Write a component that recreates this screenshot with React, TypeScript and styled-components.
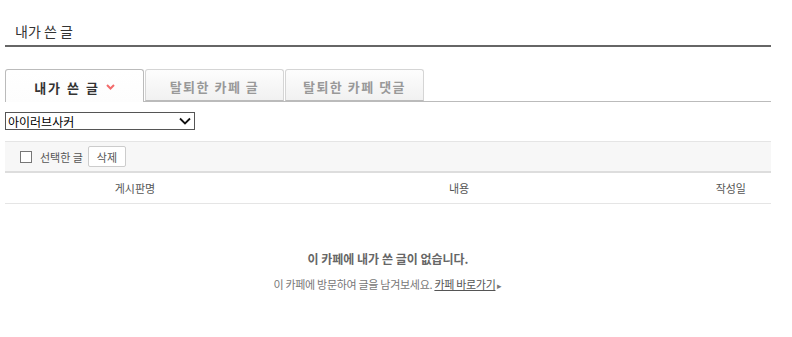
import React from "react";
import styled, { createGlobalStyle } from "styled-components";

const GlobalStyle = createGlobalStyle`
	body {
		margin: 0;
		background: #fff;
		font-family: "Noto Sans CJK KR", "Noto Sans", sans-serif;
		font-size: 12px;
		color: #333;
	}
`;

const tabs = ["내가 쓴 글", "탈퇴한 카페 글", "탈퇴한 카페 댓글"];

const App = () => {
	return (
		<>
			<GlobalStyle />
			<Page>
				<Title>내가 쓴 글</Title>
				<TabBar>
					{tabs.map((label, i) => (
						<Tab key={label} active={i === 0}>
							{label}
							{i === 0 && (
								<svg width="9" height="6" viewBox="0 0 9 6">
									<path d="M1 1l3.5 3.5L8 1" fill="none" stroke="#f36b6b" strokeWidth="2" />
								</svg>
							)}
						</Tab>
					))}
				</TabBar>
				<Select>
					<span>아이러브사커</span>
					<svg width="12" height="8" viewBox="0 0 12 8">
						<path d="M1 1.5l5 5 5-5" fill="none" stroke="#111" strokeWidth="1.8" />
					</svg>
				</Select>
				<Toolbar>
					<Checkbox />
					<Label>선택한 글</Label>
					<SmallButton>삭제</SmallButton>
				</Toolbar>
				<HeaderRow>
					<Cell>게시판명</Cell>
					<Cell>내용</Cell>
					<Cell align="right">작성일</Cell>
				</HeaderRow>
				<Empty>
					<strong>이 카페에 내가 쓴 글이 없습니다.</strong>
					<p>
						이 카페에 방문하여 글을 남겨보세요. <a>카페 바로가기</a>
						<Arrow>▸</Arrow>
					</p>
				</Empty>
			</Page>
		</>
	);
};

export default App;

const Page = styled.div`
	width: 766px;
	padding-left: 5px;
`;

const Title = styled.h2`
	margin: 0;
	height: 47px;
	padding-left: 10px;
	line-height: 62px;
	box-sizing: border-box;
	font-size: 14px;
	font-weight: normal;
	color: #333;
	border-bottom: 2px solid #666;
`;

const TabBar = styled.div`
	display: flex;
	margin-top: 22px;
	border-bottom: 1px solid #bbb;
	height: 33px;
	box-sizing: border-box;
`;

const Tab = styled.div<{ active?: boolean }>`
	width: 139px;
	height: ${(p) => (p.active ? "33px" : "32px")};
	box-sizing: border-box;
	display: flex;
	align-items: center;
	justify-content: center;
	gap: 6px;
	border: 1px solid ${(p) => (p.active ? "#bbb" : "#d5d5d5")};
	border-bottom: ${(p) => (p.active ? "none" : "1px solid #bbb")};
	border-radius: 3px 3px 0 0;
	background: ${(p) => (p.active ? "linear-gradient(#fff, #fdfdfd)" : "linear-gradient(#fdfdfd, #f1f1f1)")};
	color: ${(p) => (p.active ? "#333" : "#999")};
	font-size: 13px;
	font-weight: bold;
	letter-spacing: ${(p) => (p.active ? "2px" : "1.5px")};
	margin-right: 1px;
	padding-top: 2px;
`;

const Select = styled.div`
	margin-top: 10px;
	width: 190px;
	height: 18px;
	box-sizing: border-box;
	border: 1px solid #555;
	display: flex;
	align-items: center;
	justify-content: space-between;
	padding: 0 3px 0 2px;
	font-size: 12px;
	color: #000;
`;

const Toolbar = styled.div`
	margin-top: 11px;
	height: 32px;
	box-sizing: border-box;
	display: flex;
	align-items: center;
	padding-left: 15px;
	background: #f7f7f7;
	border-top: 1px solid #e5e5e5;
	border-bottom: 2px solid #ddd;
`;

const Checkbox = styled.span`
	width: 12px;
	height: 12px;
	box-sizing: border-box;
	border: 1px solid #777;
	background: #fff;
`;

const Label = styled.span`
	margin-left: 8px;
	color: #555;
	font-size: 11px;
`;

const SmallButton = styled.button`
	margin-left: 5px;
	width: 38px;
	height: 21px;
	border: 1px solid #ccc;
	border-radius: 2px;
	background: #fff;
	color: #555;
	font-family: inherit;
	font-size: 11px;
	padding: 0;
`;

const HeaderRow = styled.div`
	display: grid;
	grid-template-columns: 260px 388px 1fr;
	height: 31px;
	align-items: center;
	border-bottom: 1px solid #e5e5e5;
	box-sizing: border-box;
`;

const Cell = styled.div<{ align?: string }>`
	text-align: ${(p) => (p.align === "right" ? "right" : "center")};
	padding-right: ${(p) => (p.align === "right" ? "25px" : "0")};
	font-size: 11px;
	color: #555;
`;

const Empty = styled.div`
	text-align: center;
	padding-top: 46px;

	strong {
		display: block;
		font-size: 12px;
		color: #666;
		font-weight: bold;
	}

	p {
		margin: 9px 0 0;
		font-size: 11px;
		color: #777;
		letter-spacing: -0.3px;
	}

	a {
		color: #555;
		text-decoration: underline;
	}
`;

const Arrow = styled.span`
	margin-left: 2px;
	font-size: 9px;
	color: #777;
	letter-spacing: 0;
`;
